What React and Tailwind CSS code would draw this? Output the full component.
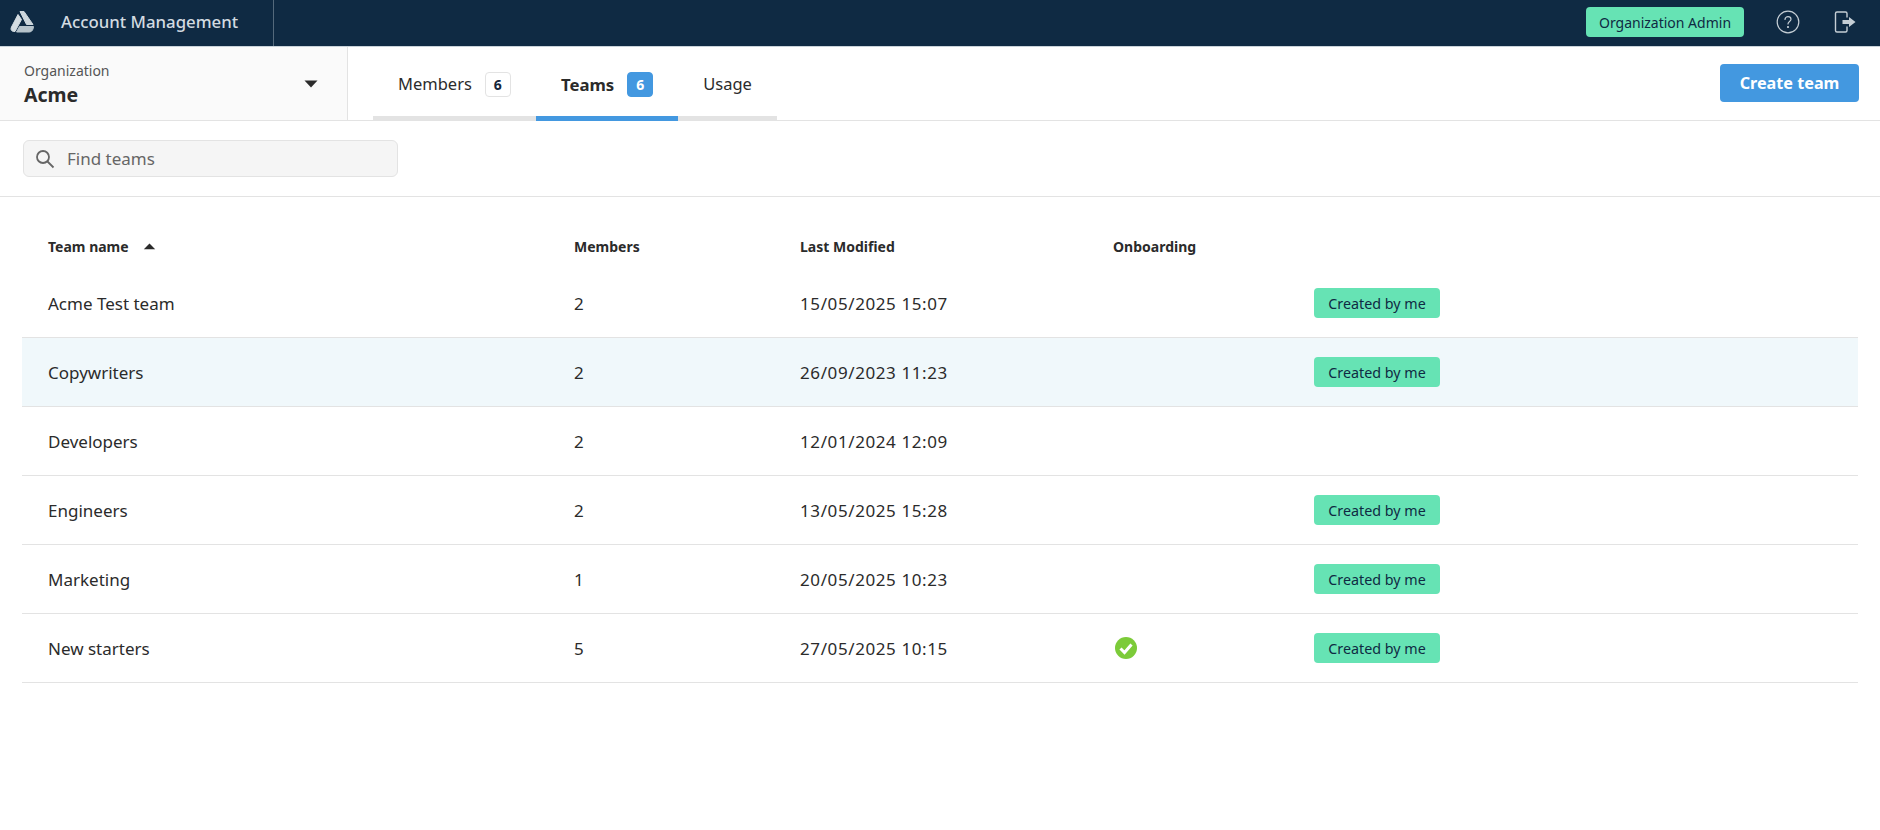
import React from "react";

const teams = [
  { name: "Acme Test team", members: 2, modified: "15/05/2025 15:07", mine: true },
  { name: "Copywriters", members: 2, modified: "26/09/2023 11:23", mine: true, hover: true },
  { name: "Developers", members: 2, modified: "12/01/2024 12:09" },
  { name: "Engineers", members: 2, modified: "13/05/2025 15:28", mine: true },
  { name: "Marketing", members: 1, modified: "20/05/2025 10:23", mine: true },
  { name: "New starters", members: 5, modified: "27/05/2025 10:15", mine: true, onboarded: true },
];

const columns = "grid grid-cols-[526px_226px_313px_201px_1fr] items-center pl-[26px]";

function Logo() {
  return (
    <svg width="24" height="24" viewBox="0 0 24 24" className="ml-[10px]">
      <path d="M10 1.500 H14 L23 14.500 H16.500 Z" fill="#ccd6dc" stroke="#ccd6dc" strokeLinejoin="round" />
      <path d="M8 4.500 L11.500 9.500 L5 21.500 H3.500 C1 21 0.500 19 1.500 17 Z" fill="#d5dde2" stroke="#d5dde2" strokeLinejoin="round" />
      <path d="M9.500 16.500 H23.500 C23.500 19 22 22 19.500 22 H6.500 Z" fill="#b6c3cb" stroke="#b6c3cb" strokeLinejoin="round" />
    </svg>
  );
}

function Caret({ up, className }) {
  return (
    <svg width="14" height="8" viewBox="0 0 14 8" className={className}>
      <path d={up ? "M7 0.500 L13.500 7 L0.500 7 Z" : "M0.500 0.500 L13.500 0.500 L7 7.500 Z"} fill="#2b2b2b" />
    </svg>
  );
}

function TabBadge({ active, children }) {
  return (
    <span
      className={`flex h-[25px] w-[26px] items-center justify-center rounded-[4px] border text-[14px] font-bold ${
        active ? "border-[#4398e0] bg-[#4398e0] text-white" : "border-[#e3e3e3] bg-white text-[#16263a]"
      }`}
    >
      {children}
    </span>
  );
}

function Tab({ active, badge, children }) {
  return (
    <div className={`flex h-full items-center gap-[13px] border-b-[5px] px-[25px] pt-[5px] ${active ? "border-[#4398e0]" : "border-[#e3e3e3]"}`}>
      <span className={`pt-[1px] text-[#2b2b2b] ${active ? "text-[16.800px] font-bold" : "text-[16.500px]"}`}>{children}</span>
      {badge && <TabBadge active={active}>{badge}</TabBadge>}
    </div>
  );
}

export default function App() {
  return (
    <div className="min-h-[830px] bg-white text-[#2b2b2b] [font-family:'Noto_Sans','Liberation_Sans',sans-serif]">
      {/* top bar */}
      <header className="flex h-[47px] items-center border-b border-[#c9d3da] bg-[#0f2a43] pb-[2px]">
        <div className="-mb-[2px] flex h-[46px] w-[274px] items-center border-r border-[#54697b] pb-[2px]">
          <Logo />
          <span className="ml-[27px] text-[16.800px] font-medium text-[#d3dbe1]">Account Management</span>
        </div>
        <div className="ml-auto flex items-center">
          <span className="flex h-[30px] w-[158px] items-center justify-center rounded-[4px] bg-[#66e3b4] text-[14px] text-[#0f2a43]">
            Organization Admin
          </span>
          <svg width="24" height="24" viewBox="0 0 24 24" className="ml-[32px]" fill="none" stroke="#c5ced5" strokeWidth="1.200" strokeLinecap="round">
            <circle cx="12" cy="12" r="10.800" />
            <path d="M9 9.500 C9 7.500 10.500 6.700 12 6.700 C13.700 6.700 15 7.800 15 9.300 C15 11.500 12 11.500 12 14" />
            <circle cx="12" cy="17" r="0.500" fill="#c5ced5" />
          </svg>
          <svg width="24" height="24" viewBox="0 0 24 24" className="ml-[33px] mr-[23px]" fill="none" stroke="#c5ced5" strokeWidth="1.400" strokeLinecap="round">
            <path d="M14 7 V3.500 C14 2.500 13.500 2 12.500 2 H4 C3 2 2.500 2.500 2.500 3.500 V20.500 C2.500 21.500 3 22 4 22 H12.500 C13.500 22 14 21.500 14 20.500 V17" />
            <path d="M9.500 10 H16 V7 L22.500 12 L16 17 V14 H9.500 Z" fill="#c5ced5" stroke="none" />
          </svg>
        </div>
      </header>

      {/* org switcher, tabs */}
      <div className="flex h-[74px] items-stretch border-b border-[#e3e3e3]">
        <div className="flex w-[348px] items-center justify-between border-r border-[#e3e3e3] bg-[#fafafa] pl-[24px] pr-[29px]">
          <div className="pt-[2px]">
            <div className="text-[14px] leading-[20px] text-[#555]">Organization</div>
            <div className="text-[19.500px] font-bold leading-[28px] text-[#2b2b2b]">Acme</div>
          </div>
          <Caret />
        </div>
        <nav className="-mb-px ml-[25px] flex">
          <Tab badge="6">Members</Tab>
          <Tab active badge="6">Teams</Tab>
          <Tab>Usage</Tab>
        </nav>
        <button className="ml-auto mr-[21px] mt-[17px] h-[38px] w-[139px] rounded-[4px] bg-[#4398e0] text-[16.200px] font-bold text-white">
          Create team
        </button>
      </div>

      {/* search */}
      <div className="border-b border-[#e3e3e3] px-[23px] py-[19px]">
        <div className="flex h-[37px] w-[375px] items-center rounded-[6px] border border-[#e3e3e3] bg-[#f5f5f5] pl-[11px]">
          <svg width="20" height="20" viewBox="0 0 20 20" fill="none" stroke="#666" strokeWidth="1.800">
            <circle cx="8" cy="8" r="6" />
            <path d="M12.500 12.500 L18.500 18.500" />
          </svg>
          <span className="ml-[12px] pt-[1px] text-[17px] text-[#666]">Find teams</span>
        </div>
      </div>

      {/* team table */}
      <div className="mx-[22px]">
        <div className={`${columns} mb-[10px] mt-[36px] h-[26px] text-[14px] font-bold text-[#2b2b2b]`}>
          <div className="flex items-center gap-[14px]">
            Team name
            <Caret up className="h-[7px] w-[13px]" />
          </div>
          <div>Members</div>
          <div>Last Modified</div>
          <div>Onboarding</div>
        </div>
        {teams.map((t) => (
          <div key={t.name} className={`${columns} h-[69px] border-b border-[#e3e3e3] text-[17px] ${t.hover ? "bg-[#f0f8fb]" : ""}`}>
            <div className="pt-[1px]">{t.name}</div>
            <div className="pt-[1px]">{t.members}</div>
            <div className="pt-[1px] tracking-[0.600px]">{t.modified}</div>
            <div>
              {t.onboarded && (
                <svg width="24" height="24" viewBox="0 0 24 24" className="ml-[1px]">
                  <circle cx="12" cy="12" r="11" fill="#7ccb39" />
                  <path d="M6.500 12.500 L10.500 16.500 L17.500 8.500" fill="none" stroke="#fff" strokeWidth="3" />
                </svg>
              )}
            </div>
            <div>
              {t.mine && (
                <span className="flex h-[30px] w-[126px] items-center justify-center rounded-[4px] bg-[#66e3b4] pt-[1px] text-[14.300px] text-[#0f2a43]">
                  Created by me
                </span>
              )}
            </div>
          </div>
        ))}
      </div>
    </div>
  );
}
